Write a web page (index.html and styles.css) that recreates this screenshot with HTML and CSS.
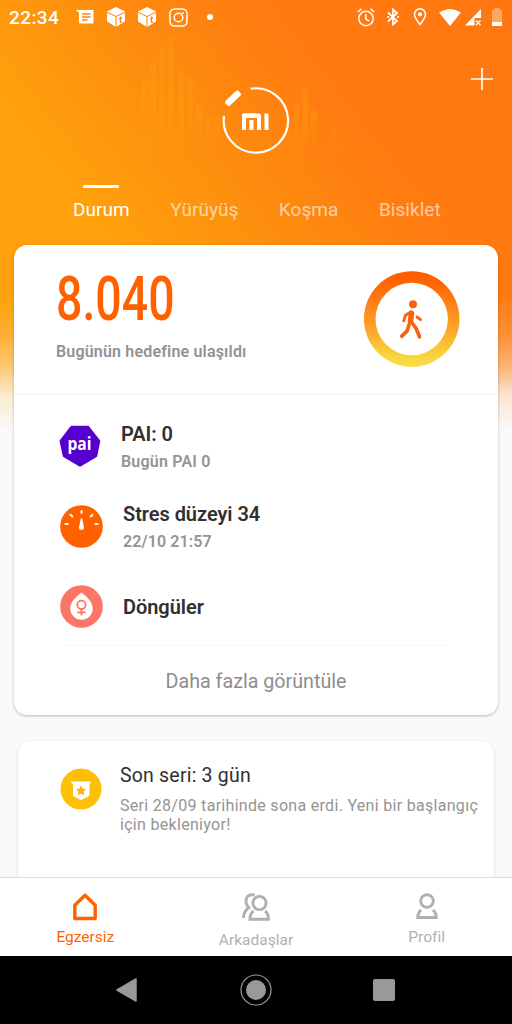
FILE: index.html
```html
<!DOCTYPE html>
<html lang="tr">
<head>
<meta charset="UTF-8">
<meta name="viewport" content="width=512, initial-scale=1.0">
<title>Mi Fit</title>
<link rel="stylesheet" href="styles.css">
</head>
<body>
<div class="screen">
    <svg class="bars" width="512" height="240" viewBox="0 0 512 240">
        <defs>
            <linearGradient id="bar-fade" gradientUnits="userSpaceOnUse" x1="0" y1="35" x2="0" y2="160">
                <stop offset="0" stop-color="#ffa30c" stop-opacity=".22"/>
                <stop offset=".6" stop-color="#ffa30c" stop-opacity=".3"/>
                <stop offset="1" stop-color="#ffa30c" stop-opacity="0"/>
            </linearGradient>
        </defs>
        <g fill="url(#bar-fade)">
            <rect x="115" y="128" width="6" height="18"/><rect x="123" y="121" width="6" height="24"/><rect x="132" y="128" width="6" height="17"/>
            <rect x="142" y="77" width="6" height="75"/><rect x="150" y="60" width="6" height="92"/><rect x="159" y="47" width="6" height="105"/><rect x="168" y="36" width="6" height="116"/><rect x="178" y="73" width="6" height="80"/><rect x="187" y="76" width="6" height="78"/><rect x="196" y="105" width="7" height="50"/><rect x="205" y="116" width="6" height="38"/><rect x="213" y="118" width="6" height="36"/>
            <rect x="294" y="104" width="6" height="55"/><rect x="302" y="87" width="6" height="72"/><rect x="311" y="110" width="6" height="49"/><rect x="321" y="145" width="5" height="14"/><rect x="330" y="127" width="6" height="32"/><rect x="339" y="140" width="6" height="19"/><rect x="366" y="146" width="5" height="12"/><rect x="375" y="144" width="5" height="14"/>
        </g>
    </svg>

    <div class="status">
        <span class="time">22:34</span>
        <div class="status-left">
            <svg width="18" height="16" viewBox="0 0 18 16"><path fill="#fff" d="M0 1h17.500v12.500q0 1-1 1H4q-1 0-1-1V4z"/><path stroke="#ff8310" stroke-width="1.500" d="M6 5h8.500M6 8h8.500M6 11h5.500"/></svg>
            <svg width="18" height="20" viewBox="0 0 18 20"><path fill="#fff" d="M9 0l9 4.500v10L9 20l-9-5.500v-10z"/><path fill="none" stroke="#ff8310" stroke-width="1" d="M0 5.300l9 4.200 9-4.200M9 9.500V20"/><path fill="none" stroke="#ff8310" stroke-width="1.300" d="M13.400 9.500v5q0 1.300 1.800.7M12 12l3.200-1.300"/></svg>
            <svg width="18" height="20" viewBox="0 0 18 20"><path fill="#fff" d="M9 0l9 4.500v10L9 20l-9-5.500v-10z"/><path fill="none" stroke="#ff8310" stroke-width="1" d="M0 5.300l9 4.200 9-4.200M9 9.500V20"/><path fill="none" stroke="#ff8310" stroke-width="1.300" d="M13.400 9.500v5q0 1.300 1.800.7M12 12l3.200-1.300"/></svg>
            <svg width="19" height="19" viewBox="0 0 19 19" fill="none" stroke="#fff" stroke-width="1.500"><rect x="1" y="1" width="17" height="17" rx="4.500"/><circle cx="9.500" cy="9.500" r="4.300"/><circle cx="14" cy="5" r=".6" fill="#fff" stroke-width=".8"/></svg>
            <i class="dot"></i>
        </div>
        <div class="status-right">
            <svg width="18" height="19" viewBox="0 0 18 19" fill="none" stroke="#fff" stroke-width="1.500"><circle cx="9" cy="10.500" r="7.200"/><path d="M8.800 6v5l3.600 2.200M.8 4L4.500.9M17.200 4L13.500.9"/></svg>
            <svg width="12" height="18" viewBox="0 0 12 18" fill="none" stroke="#fff" stroke-width="1.800"><path d="M1 4.500l9 8.500-4 3.500v-15l4 3.500-9 8.500"/><path d="M.3 9h1.700M10.200 9h1.700" stroke-width="2"/></svg>
            <svg width="14" height="18" viewBox="0 0 14 18"><path fill="none" stroke="#fff" stroke-width="1.600" d="M7 16.500C4 12.500 1.500 9.500 1.500 6.400a5.500 5.500 0 0 1 11 0C12.500 9.500 10 12.500 7 16.500z"/><circle cx="7" cy="6.300" r="2.100" fill="#fff"/></svg>
            <svg width="22" height="17" viewBox="0 0 22 17"><path fill="#fff" d="M0 3.600Q11-3.600 22 3.600L11 17z"/></svg>
            <svg width="17" height="17" viewBox="0 0 17 17"><path fill="#fff" d="M16 0v9H9.500v7.500H0z"/><path stroke="#fff" stroke-width="1.400" d="M11 11.500l4.500 4.500M15.500 11.500L11 16"/></svg>
            <svg width="10" height="18" viewBox="0 0 10 18"><path fill="#fff" fill-opacity=".35" d="M0 1.800h2.500V0h5v1.800H10V14H0z"/><path fill="#fff" d="M0 14h10v4H0z"/></svg>
        </div>
    </div>

    <div class="hero">
        <svg class="logo" width="68" height="68" viewBox="0 0 68 68">
            <path fill="none" stroke="#fff" stroke-width="2.200" d="M28.700 1.700A32.200 32.200 0 1 1 2 29"/>
            <rect x="2" y="8" width="18" height="6.500" rx="2" fill="#fff" transform="rotate(-43 11 11.250)"/>
            <g fill="#fff"><rect x="20" y="26.500" width="4" height="16.500"/><rect x="22" y="26.500" width="17" height="4.500" rx="2.500"/><rect x="22" y="26.500" width="12" height="4"/><rect x="35" y="29" width="4" height="14"/><rect x="27.300" y="33" width="4.200" height="10"/><rect x="42.500" y="26.500" width="4" height="16.500"/></g>
        </svg>
        <svg class="add" width="22" height="22" viewBox="0 0 22 22"><path stroke="#fff" stroke-width="1.700" d="M11 0v22M0 11h22"/></svg>
    </div>

    <div class="tabs">
        <span class="tab active">Durum</span>
        <span class="tab">Yürüyüş</span>
        <span class="tab">Koşma</span>
        <span class="tab">Bisiklet</span>
    </div>

    <div class="card main-card">
        <div class="steps">
            <div>
                <div class="count">8.040</div>
                <div class="goal">Bugünün hedefine ulaşıldı</div>
            </div>
            <svg class="ring" width="96" height="96" viewBox="0 0 96 96">
                <defs><linearGradient id="ring" x1="0" y1="0" x2="0" y2="1"><stop offset="0" stop-color="#ff5c00"/><stop offset=".12" stop-color="#ff6404"/><stop offset=".6" stop-color="#fda528"/><stop offset=".9" stop-color="#f9d640"/><stop offset="1" stop-color="#fadc45"/></linearGradient></defs>
                <circle cx="47.700" cy="48" r="47.800" fill="url(#ring)"/>
                <circle cx="47.700" cy="48" r="36.200" fill="#fff"/>
                <g fill="none" stroke="#f9610d" stroke-linecap="round" stroke-linejoin="round">
                    <circle cx="49" cy="33.300" r="4" fill="#f9610d" stroke="none"/>
                    <path stroke-width="5.500" d="M47.500 42.500l-1 7.500"/>
                    <path stroke-width="2.900" d="M47 40.800l-5.700 3.700-1.500 5.300M53 46l3.500 2.600"/>
                    <path stroke-width="3.700" d="M47.500 51l4.700 6.500 3.300 8.300M45 54l-2 6.200-5.200 5"/>
                </g>
            </svg>
        </div>
        <div class="rows">
            <div class="row">
                <svg class="pai" width="42" height="42" viewBox="0 0 42 42"><path fill="#5500cf" stroke="#5500cf" stroke-width="2.500" stroke-linejoin="round" d="M12.500 2h16.500L40 16l-3 15L21 40.300 5 31 1.800 16z"/><text x="20.500" y="24.500" text-anchor="middle" textLength="24" lengthAdjust="spacingAndGlyphs">pai</text></svg>
                <div class="row-text"><div class="title">PAI: 0</div><div class="sub">Bugün PAI 0</div></div>
            </div>
            <div class="row">
                <svg width="43" height="43" viewBox="0 0 43 43"><circle cx="21.500" cy="21.500" r="21.300" fill="#ff6100"/><path stroke="#fff" stroke-width="2" stroke-linecap="round" d="M21.500 6v2M10.500 9.700l1.800 1.800M32.500 9.700l-1.800 1.800M5.500 19h2.300M35.300 19h2.300"/><path fill="#fff" d="M20.700 13.500h1.600l1.700 9a2.500 2.500 0 1 1-5 0z"/></svg>
                <div class="row-text"><div class="title">Stres düzeyi 34</div><div class="sub date">22/10 21:57</div></div>
            </div>
            <div class="row cycles">
                <svg width="43" height="43" viewBox="0 0 43 43"><circle cx="21.500" cy="21.500" r="21.300" fill="#fc7668"/><path fill="#fff" d="M21.500 7.500C26 11 32.700 16.500 32.700 23.500a11.200 11.200 0 0 1-22.400 0C10.300 16.500 17 11 21.500 7.500z"/><g fill="none" stroke="#fc7668" stroke-width="1.800"><circle cx="21.500" cy="19.800" r="4.200"/><path d="M21.500 24v6.500M17.300 27.400h8.400"/></g></svg>
                <div class="row-text"><div class="title">Döngüler</div></div>
            </div>
        </div>
        <div class="more">Daha fazla görüntüle</div>
    </div>

    <div class="card streak-card">
        <svg width="42" height="42" viewBox="0 0 42 42"><circle cx="21" cy="21" r="20.500" fill="#fdc006"/><path fill="#fff" d="M10 13.500h20.500v2h-1V26.500q0 1.500-1.500 2.200L21 32l-6.500-3.300Q13 28 13 26.500V16z"/><path fill="#fdb515" stroke="#fdb515" stroke-linejoin="round" d="M21 18.300l1.300 2.800 3 .4-2.200 2.100.6 3L21 25.200l-2.700 1.400.6-3-2.200-2.100 3-.4z"/></svg>
        <div>
            <div class="streak-title">Son seri: 3 gün</div>
            <div class="streak-text">Seri 28/09 tarihinde sona erdi. Yeni bir başlangıç<br>için bekleniyor!</div>
        </div>
    </div>

    <div class="bottom">
        <div class="nav-item active">
            <svg width="28" height="30" viewBox="0 0 28 30"><path fill="none" stroke="currentColor" stroke-width="3.400" stroke-linejoin="round" d="M14 3.300l10.200 10V26.500H3.800V13.300z"/></svg>
            <span>Egzersiz</span>
        </div>
        <div class="nav-item friends">
            <svg width="30" height="30" viewBox="0 0 30 30" fill="none" stroke="currentColor" stroke-width="2.900"><circle cx="18.500" cy="11" r="6.600"/><path d="M12.500 19q-3.500 2.500-3.500 8.300h18.500q0-5.800-3.500-8.300M13.800 3Q5 1.500 5 9.500q0 3.500 2.800 6Q2.500 19.500 2.500 26"/></svg>
            <span>Arkadaşlar</span>
        </div>
        <div class="nav-item">
            <svg width="28" height="30" viewBox="0 0 28 30" fill="none" stroke="currentColor" stroke-width="2.900"><circle cx="14" cy="9" r="6.300"/><path d="M8.200 18q-3.400 2.300-3.400 7.500h18.400q0-5.200-3.400-7.500"/></svg>
            <span>Profil</span>
        </div>
    </div>

    <div class="android">
        <svg width="22" height="24" viewBox="0 0 22 24"><path fill="#999" stroke="#999" stroke-width="1.500" stroke-linejoin="round" d="M1 12L20 1v22z"/></svg>
        <svg width="32" height="32" viewBox="0 0 32 32"><circle cx="16" cy="16" r="15" fill="none" stroke="#999" stroke-width="1.200"/><circle cx="16" cy="16" r="10" fill="#999"/></svg>
        <i class="recent"></i>
    </div>
</div>
</body>
</html>
```
FILE: styles.css
```css
body {
    margin: 0;
    font-family: Roboto, sans-serif;
}
.screen {
    position: relative;
    width: 512px;
    height: 1024px;
    overflow: hidden;
    display: flex;
    flex-direction: column;
    background:
        linear-gradient(180deg, #fafafa00 295px, #fafafa28 335px, #fafafa70 368px, #fafafad0 395px, #fafafa 430px),
        linear-gradient(52deg, #ffa20c 0, #ffa00c 30%, #fd8c0e 50%, #ff7c10 66%, #ff7610 100%) 0 -40px / 512px 470px no-repeat;
    background-color: #fafafa;
}
.bars {
    position: absolute;
    left: 0;
    top: 0;
}

/* status bar */
.status {
    display: flex;
    align-items: center;
    height: 34px;
    padding: 0 10px 0 9px;
    color: #fff;
}
.time {
    width: 67px;
    font-size: 19px;
    font-weight: 500;
    letter-spacing: .4px;
    padding-top: 1px;
}
.status-left {
    display: flex;
    align-items: center;
    gap: 13px;
}
.dot {
    width: 6px;
    height: 6px;
    margin-left: 6px;
    border-radius: 50%;
    background: #fff;
}
.status-right {
    display: flex;
    align-items: center;
    margin-left: auto;
}
.status-right svg:nth-child(2) { margin-left: 12px; }
.status-right svg:nth-child(3) { margin-left: 14px; }
.status-right svg:nth-child(4) { margin-left: 12px; }
.status-right svg:nth-child(5) { margin-left: 4px; }
.status-right svg:nth-child(6) { margin-left: 10px; }

/* logo */
.hero {
    display: flex;
    justify-content: space-between;
    height: 151px;
}
.logo {
    margin: 53px 0 0 222px;
}
.add {
    margin: 34px 19px 0 0;
}

.tabs {
    display: flex;
    height: 60px;
    padding-left: 73px;
    color: #fff;
}
.tab {
    font-size: 19px;
    line-height: 50px;
    letter-spacing: .05px;
    margin-right: 40.5px;
    opacity: .6;
}
.tab.active {
    opacity: 1;
}
.tab.active::before {
    content: "";
    display: block;
    width: 36px;
    height: 3px;
    margin: 0 auto -3px;
    border-radius: 2px;
    background: #fff;
}

/* cards */
.card {
    position: relative;
    background: #fff;
    border-radius: 13px;
    box-shadow: 0 1px 3px #0004;
}
.main-card {
    height: 470px;
    margin: 0 14px;
}
.steps {
    display: flex;
    justify-content: space-between;
    height: 149px;
    margin: 0 2px;
    padding: 0 36px 0 40px;
    border-bottom: 1px solid #f3f3f3;
}
.count {
    width: 160px;
    height: 93px;
    line-height: 107px;
    font-size: 62px;
    font-weight: 500;
    color: #ff6100;
    transform: scaleX(.75);
    transform-origin: 0 0;
}
.goal {
    font-size: 16px;
    font-weight: 600;
    letter-spacing: .18px;
    line-height: 28px;
    color: #929292;
}
.ring {
    margin-top: 26px;
}
.rows {
    height: 250px;
    margin: 0 50px;
    border-bottom: 1px solid #f7f7f7;
}
.row {
    display: flex;
    align-items: center;
    gap: 20px;
    height: 80px;
    margin-left: -4px;
}
.row:first-child {
    padding-top: 11px;
}
.row .pai {
    margin: -1px -1px 0;
}
.row-text {
    padding-top: 4px;
}
.cycles .row-text {
    padding-top: 2px;
}
.pai text {
    font-family: "Open Sans", sans-serif;
    font-size: 18px;
    font-weight: 700;
    fill: #fff;
}
.title {
    font-size: 20px;
    font-weight: 600;
    line-height: 28px;
    letter-spacing: -.05px;
    color: #303030;
}
.row:first-child .title,
.row:first-child .sub {
    margin-left: 1px;
}
.sub {
    font-size: 16px;
    font-weight: 600;
    line-height: 28px;
    letter-spacing: .2px;
    color: #949494;
}
.date {
    letter-spacing: .1px;
}
.more {
    line-height: 72px;
    font-size: 19.7px;
    text-align: center;
    color: #8d8d8d;
}
.streak-card {
    display: flex;
    gap: 18px;
    height: 160px;
    margin: 26px 18px 0;
    padding: 27px 0 0 42px;
    box-sizing: border-box;
    flex: none;
    box-shadow: 0 1px 3px #0003;
}
.streak-title {
    margin-top: -5px;
    font-size: 19.5px;
    line-height: 26px;
    letter-spacing: .2px;
    color: #303030;
}
.streak-text {
    margin-top: 7px;
    font-size: 16px;
    line-height: 19px;
    letter-spacing: .3px;
    color: #949494;
    white-space: nowrap;
}

/* bottom navigation */
.bottom {
    position: relative;
    display: flex;
    height: 78px;
    margin-top: -24px;
    flex: none;
    background: #fff;
    border-top: 1px solid #dcdcdc;
}
.nav-item {
    flex: 1;
    display: flex;
    flex-direction: column;
    align-items: center;
    padding-top: 14px;
    font-size: 15.5px;
    line-height: 30px;
    color: #b0b0b0;
}
.nav-item.active {
    color: #ff6100;
}
.friends svg {
    margin-bottom: 3px;
}
.android {
    display: flex;
    align-items: center;
    height: 68px;
    flex: none;
    padding-left: 116px;
    background: #000;
}
.android svg:nth-child(2) {
    margin-left: 102px;
}
.recent {
    width: 22px;
    height: 22px;
    margin-left: 101px;
    border-radius: 2px;
    background: #999;
}
```
